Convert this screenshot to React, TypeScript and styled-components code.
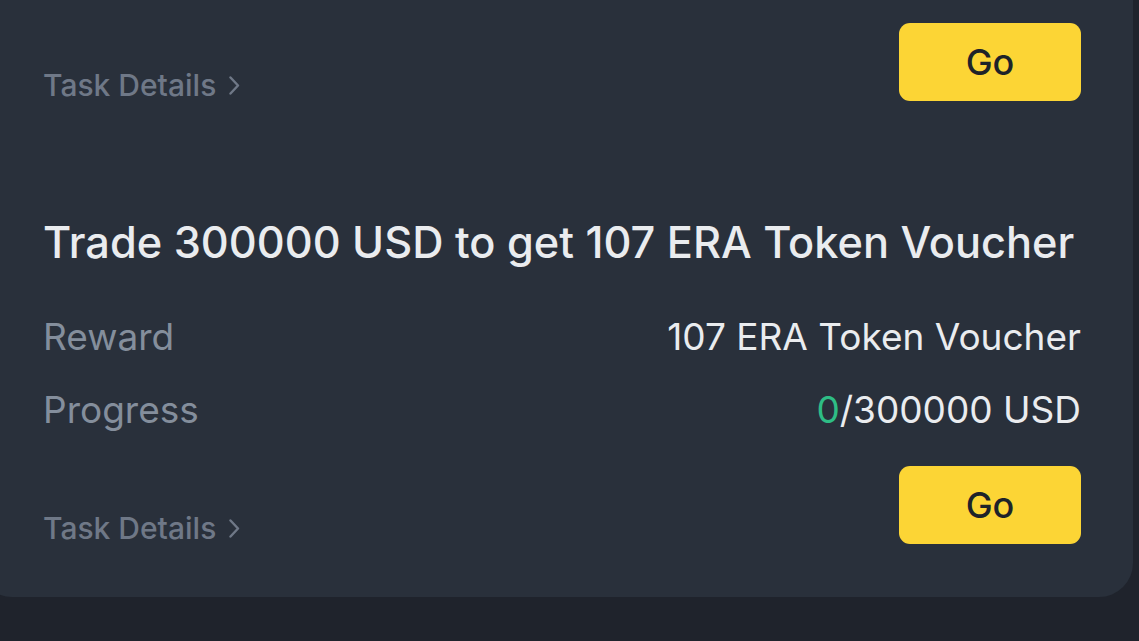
import React from 'react';
import styled, { createGlobalStyle } from 'styled-components';

const GlobalStyle = createGlobalStyle`
  html, body {
    margin: 0;
    padding: 0;
    background: #1f232c;
    font-family: Inter, "Noto Sans", "Liberation Sans", sans-serif;
  }
  #root {
    min-height: 100vh;
    overflow: hidden;
  }
`;

const Card = styled.div`
  margin: 0 6px 0 -22px;
  padding: 23px 52px 53px 65px;
  background: #29303b;
  border-radius: 0 0 34px 34px;
`;

const Task = styled.section<{ spaced?: boolean }>`
  margin-top: ${p => (p.spaced ? '115px' : '0')};
`;

const Title = styled.h3`
  margin: 0 0 47px;
  font-size: 43.3px;
  line-height: 52px;
  font-weight: 500;
  color: #eaecef;
  white-space: nowrap;
`;

const InfoRow = styled.div`
  display: flex;
  justify-content: space-between;
  align-items: center;
  font-size: 37px;
  line-height: 44px;
  & + & {
    margin-top: 29px;
  }
`;

const Label = styled.span`
  color: #848e9c;
`;

const Value = styled.span`
  color: #eaecef;
`;

const Done = styled.span`
  color: #2ebd85;
`;

const Footer = styled.div<{ spaced?: boolean }>`
  display: flex;
  justify-content: space-between;
  align-items: flex-end;
  margin-top: ${p => (p.spaced ? '34px' : '0')};
`;

const DetailsLink = styled.a`
  display: flex;
  align-items: center;
  gap: 13px;
  font-size: 30px;
  line-height: 32px;
  font-weight: 500;
  color: #6f7887;
  text-decoration: none;
  cursor: pointer;
`;

const GoButton = styled.button`
  width: 182px;
  height: 78px;
  border: none;
  border-radius: 11px;
  background: #fcd535;
  color: #1e2329;
  font-family: inherit;
  font-size: 36px;
  font-weight: 500;
  cursor: pointer;
`;

const Chevron = () => (
  <svg width="11" height="19" viewBox="0 0 11 19" fill="none">
    <path d="M1.5 1.5L9 9.5L1.5 17.5" stroke="currentColor" strokeWidth="2.4" strokeLinecap="round" strokeLinejoin="round" />
  </svg>
);

const TaskFooter: React.FC<{ spaced?: boolean }> = ({ spaced }) => (
  <Footer spaced={spaced}>
    <DetailsLink>
      Task Details
      <Chevron />
    </DetailsLink>
    <GoButton>Go</GoButton>
  </Footer>
);

export default function App() {
  return (
    <>
      <GlobalStyle />
      <Card>
        <Task>
          <TaskFooter />
        </Task>
        <Task spaced>
          <Title>Trade 300000 USD to get 107 ERA Token Voucher</Title>
          <InfoRow>
            <Label>Reward</Label>
            <Value>107 ERA Token Voucher</Value>
          </InfoRow>
          <InfoRow>
            <Label>Progress</Label>
            <Value>
              <Done>0</Done>/300000 USD
            </Value>
          </InfoRow>
          <TaskFooter spaced />
        </Task>
      </Card>
    </>
  );
}
